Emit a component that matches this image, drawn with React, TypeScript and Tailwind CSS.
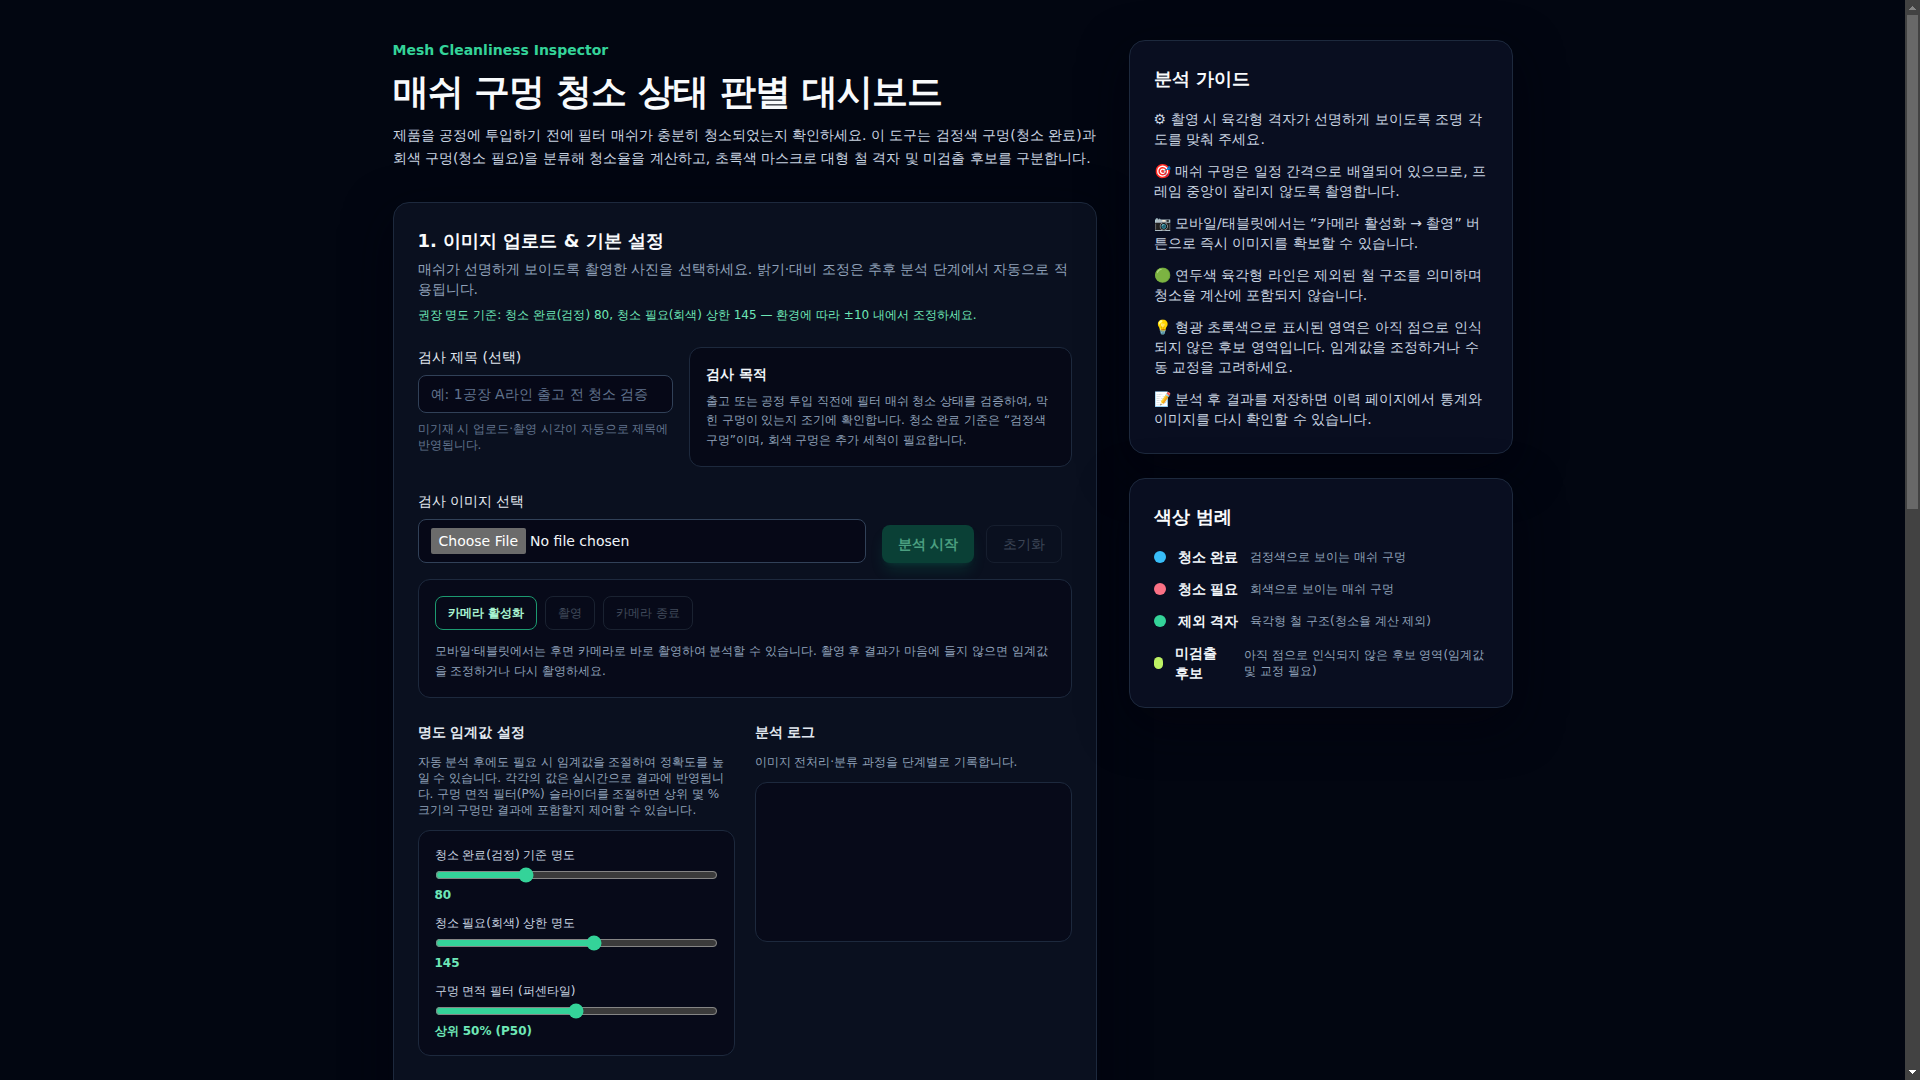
import { useState } from 'react'

const guides = [
  '⚙ 촬영 시 육각형 격자가 선명하게 보이도록 조명 각도를 맞춰 주세요.',
  '🎯 매쉬 구멍은 일정 간격으로 배열되어 있으므로, 프레임 중앙이 잘리지 않도록 촬영합니다.',
  '📷 모바일/태블릿에서는 “카메라 활성화 → 촬영” 버튼으로 즉시 이미지를 확보할 수 있습니다.',
  '🟢 연두색 육각형 라인은 제외된 철 구조를 의미하며 청소율 계산에 포함되지 않습니다.',
  '💡 형광 초록색으로 표시된 영역은 아직 점으로 인식되지 않은 후보 영역입니다. 임계값을 조정하거나 수동 교정을 고려하세요.',
  '📝 분석 후 결과를 저장하면 이력 페이지에서 통계와 이미지를 다시 확인할 수 있습니다.',
]

const legends = [
  { color: 'bg-[#38bdf8]', label: '청소 완료', description: '검정색으로 보이는 매쉬 구멍' },
  { color: 'bg-[#fb7185]', label: '청소 필요', description: '회색으로 보이는 매쉬 구멍' },
  { color: 'bg-[#34d399]', label: '제외 격자', description: '육각형 철 구조(청소율 계산 제외)' },
  { color: 'bg-[#bef264]', label: '미검출 후보', description: '아직 점으로 인식되지 않은 후보 영역(임계값 및 교정 필요)' },
]

interface ThresholdSliderProps {
  id: string
  label: string
  max: number
  value: number
  display: string
  onChange: (value: number) => void
}

function ThresholdSlider({ id, label, max, value, display, onChange }: ThresholdSliderProps) {
  return (
    <div className="flex flex-col gap-1 text-xs">
      <label htmlFor={id} className="text-slate-300">{label}</label>
      <input
        id={id}
        type="range"
        min={0}
        max={max}
        value={value}
        onChange={(e) => onChange(Number(e.target.value))}
        className="h-4 w-full accent-[#34d399]"
      />
      <output htmlFor={id} className="font-semibold text-[#6ee7b7]">{display}</output>
    </div>
  )
}

function Scrollbar() {
  return (
    <div aria-hidden="true" className="flex w-[15px] shrink-0 flex-col items-center bg-[#424242]">
      <svg viewBox="0 0 15 15" className="h-[15px] w-[15px] shrink-0 fill-[#868686]" shapeRendering="crispEdges">
        <path d="M7 6h1v1h1v1h1v1h1v1H4V9h1V8h1V7h1z" />
      </svg>
      <div className="flex w-[11px] flex-1 flex-col">
        <div className="h-[47%] bg-[#686868]"></div>
      </div>
      <svg viewBox="0 0 15 15" className="h-[15px] w-[15px] shrink-0 fill-white" shapeRendering="crispEdges">
        <path d="M4 5h7v1h-1v1H9v1H8v1H7V8H6V7H5V6H4z" />
      </svg>
    </div>
  )
}

export default function App() {
  const [title, setTitle] = useState('')
  const [cleanLevel, setCleanLevel] = useState(80)
  const [dirtyLevel, setDirtyLevel] = useState(145)
  const [percentile, setPercentile] = useState(50)

  return (
    <div className="flex h-screen bg-[#020611] font-['DejaVu_Sans',sans-serif] text-slate-100 scheme-dark">
      <div className="min-w-0 flex-1 overflow-y-auto [scrollbar-width:none]">
        <main className="mx-auto grid max-w-6xl items-start gap-8 px-4 py-10 lg:grid-cols-[1.1fr_0.6fr]">
          <div className="flex flex-col gap-8">
            <header className="flex flex-col gap-3">
              <p className="text-sm font-semibold text-[#34d399]">Mesh Cleanliness Inspector</p>
              <h1 className="text-4xl font-bold tracking-tight text-slate-50">매쉬 구멍 청소 상태 판별 대시보드</h1>
              <p className="text-sm leading-relaxed text-slate-300">
                제품을 공정에 투입하기 전에 필터 매쉬가 충분히 청소되었는지 확인하세요. 이 도구는 검정색 구멍(청소 완료)과
                회색 구멍(청소 필요)을 분류해 청소율을 계산하고, 초록색 마스크로 대형 철 격자 및 미검출 후보를 구분합니다.
              </p>
            </header>

            <section className="flex min-h-[2040px] flex-col gap-6 rounded-2xl border border-slate-800 bg-[#0a101f] p-6 shadow-[0_16px_48px] shadow-[#03030d]/70">
              <div>
                <h2 className="text-lg font-semibold text-slate-50">1. 이미지 업로드 &amp; 기본 설정</h2>
                <p className="mt-1 text-sm text-slate-400">
                  매쉬가 선명하게 보이도록 촬영한 사진을 선택하세요. 밝기·대비 조정은 추후 분석 단계에서 자동으로 적용됩니다.
                </p>
                <p className="mt-2 text-xs text-[#6ee7b7]">
                  권장 명도 기준: 청소 완료(검정) 80, 청소 필요(회색) 상한 145 — 환경에 따라 ±10 내에서 조정하세요.
                </p>
              </div>

              <div className="grid gap-4 md:grid-cols-[2fr_3fr]">
                <div className="flex flex-col gap-2">
                  <label htmlFor="title" className="text-sm text-slate-200">검사 제목 (선택)</label>
                  <input
                    id="title"
                    value={title}
                    onChange={(e) => setTitle(e.target.value)}
                    placeholder="예: 1공장 A라인 출고 전 청소 검증"
                    className="w-full rounded-lg border border-slate-700 bg-[#060817] px-3 py-2 text-sm placeholder:text-slate-500"
                  />
                  <p className="text-xs text-slate-500">미기재 시 업로드·촬영 시각이 자동으로 제목에 반영됩니다.</p>
                </div>
                <div className="rounded-xl border border-slate-800 bg-[#060917] p-4">
                  <h3 className="text-sm font-semibold text-slate-100">검사 목적</h3>
                  <p className="mt-2 text-xs leading-relaxed text-slate-400">
                    출고 또는 공정 투입 직전에 필터 매쉬 청소 상태를 검증하여, 막힌 구멍이 있는지 조기에 확인합니다. 청소 완료 기준은
                    “검정색 구멍”이며, 회색 구멍은 추가 세척이 필요합니다.
                  </p>
                </div>
              </div>

              <div className="flex flex-col gap-4">
                <div className="grid items-end gap-4 md:grid-cols-[1fr_190px]">
                  <div className="flex flex-col gap-2">
                    <label htmlFor="image" className="text-sm text-slate-200">검사 이미지 선택</label>
                    <input
                      id="image"
                      type="file"
                      accept="image/*"
                      className="w-full rounded-lg border border-slate-700 bg-[#060817] px-3 py-2 text-sm file:rounded-xs file:bg-[#6b6b6b] file:px-2 file:py-[3px] file:text-white"
                    />
                  </div>
                  <div className="flex gap-3">
                    <button disabled className="rounded-lg bg-[#0a4036] px-4 py-2 text-sm font-semibold text-[#4b9f80] shadow-lg shadow-[#10b981]/15">
                      분석 시작
                    </button>
                    <button disabled className="rounded-lg border border-[#161e2e] px-4 py-2 text-sm text-[#3d4657]">
                      초기화
                    </button>
                  </div>
                </div>

                <div className="flex flex-col gap-3 rounded-xl border border-slate-800 bg-[#070a19] p-4">
                  <div className="flex gap-2">
                    <button className="rounded-lg border border-[#1c9a70] px-3 py-2 text-xs font-semibold text-[#a7f3d0]">카메라 활성화</button>
                    <button disabled className="rounded-lg border border-[#1a2231] px-3 py-2 text-xs text-[#414a5b]">촬영</button>
                    <button disabled className="rounded-lg border border-[#1a2231] px-3 py-2 text-xs text-[#414a5b]">카메라 종료</button>
                  </div>
                  <p className="text-xs leading-relaxed text-slate-400">
                    모바일·태블릿에서는 후면 카메라로 바로 촬영하여 분석할 수 있습니다. 촬영 후 결과가 마음에 들지 않으면 임계값을 조정하거나 다시 촬영하세요.
                  </p>
                </div>
              </div>

              <div className="grid gap-5 md:grid-cols-2">
                <div className="flex flex-col gap-3">
                  <h3 className="text-sm font-semibold text-slate-200">명도 임계값 설정</h3>
                  <p className="text-xs text-slate-400">
                    자동 분석 후에도 필요 시 임계값을 조절하여 정확도를 높일 수 있습니다. 각각의 값은 실시간으로 결과에 반영됩니다. 구멍 면적
                    필터(P%) 슬라이더를 조절하면 상위 몇 % 크기의 구멍만 결과에 포함할지 제어할 수 있습니다.
                  </p>
                  <div className="flex flex-col gap-3 rounded-xl border border-slate-800 bg-[#070a19] p-4">
                    <ThresholdSlider id="clean" label="청소 완료(검정) 기준 명도" max={255} value={cleanLevel} display={`${cleanLevel}`} onChange={setCleanLevel} />
                    <ThresholdSlider id="dirty" label="청소 필요(회색) 상한 명도" max={255} value={dirtyLevel} display={`${dirtyLevel}`} onChange={setDirtyLevel} />
                    <ThresholdSlider id="percentile" label="구멍 면적 필터 (퍼센타일)" max={100} value={percentile} display={`상위 ${percentile}% (P${percentile})`} onChange={setPercentile} />
                  </div>
                </div>
                <div className="flex flex-col gap-3">
                  <h3 className="text-sm font-semibold text-slate-200">분석 로그</h3>
                  <p className="text-xs text-slate-400">이미지 전처리·분류 과정을 단계별로 기록합니다.</p>
                  <div role="log" className="h-40 rounded-xl border border-slate-800 bg-[#070a19]"></div>
                </div>
              </div>
            </section>
          </div>

          <aside className="flex flex-col gap-6">
            <section className="rounded-2xl border border-slate-800 bg-[#090e20] p-6 shadow-[0_16px_48px] shadow-[#03030d]/70">
              <h2 className="text-lg font-semibold text-slate-50">분석 가이드</h2>
              <ul className="mt-4 space-y-3 text-sm text-slate-300">
                {guides.map((guide) => (
                  <li key={guide}>{guide}</li>
                ))}
              </ul>
            </section>

            <section className="rounded-2xl border border-slate-800 bg-[#090e20] p-6 shadow-[0_16px_48px] shadow-[#03030d]/70">
              <h2 className="text-lg font-semibold text-slate-50">색상 범례</h2>
              <ul className="mt-4 space-y-3 text-sm">
                {legends.map((item) => (
                  <li key={item.label} className="flex items-center gap-3">
                    <span className={`h-3 w-3 rounded-full ${item.color}`}></span>
                    <span className="font-semibold text-slate-100">{item.label}</span>
                    <span className="text-xs text-slate-400">{item.description}</span>
                  </li>
                ))}
              </ul>
            </section>
          </aside>
        </main>
      </div>
      <Scrollbar />
    </div>
  )
}
